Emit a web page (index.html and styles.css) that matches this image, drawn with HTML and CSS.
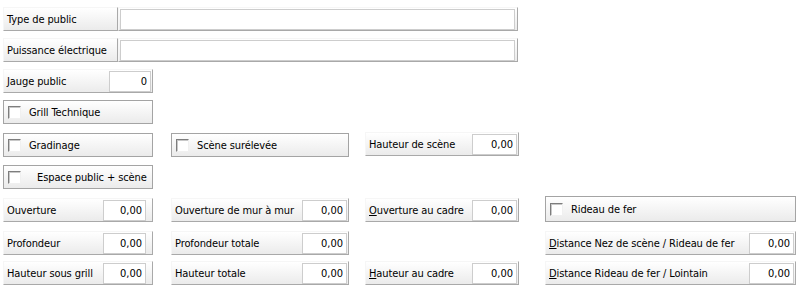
FILE: index.html
```html
<!DOCTYPE html>
<html lang="fr">
<head>
    <meta charset="UTF-8">
    <title>Salle</title>
    <link rel="stylesheet" href="styles.css">
</head>
<body>
    <div class="form">
        <div class="wide">
            <div class="field wide-label"><span class="lbl">Type de public</span></div>
            <div class="field wide-input"><input class="text" type="text" value=""></div>
        </div>
        <div class="wide">
            <div class="field wide-label"><span class="lbl">Puissance électrique</span></div>
            <div class="field wide-input"><input class="text" type="text" value=""></div>
        </div>

        <div class="field c1 jauge"><span class="lbl">Jauge public</span><input class="num" type="text" value="0"></div>

        <div class="field check c1 r4"><span class="box"></span><span class="lbl">Grill Technique</span></div>

        <div class="field check c1 r5"><span class="box"></span><span class="lbl">Gradinage</span></div>
        <div class="field check c2 r5"><span class="box"></span><span class="lbl">Scène surélevée</span></div>
        <div class="field c3 r5"><span class="lbl">Hauteur de scène</span><input class="num" type="text" value="0,00"></div>

        <div class="field check c1 r6"><span class="box"></span><span class="lbl indent">Espace public + scène</span></div>

        <div class="field c1 r7 loose"><span class="lbl">Ouverture</span><input class="num" type="text" value="0,00"></div>
        <div class="field c2 r7"><span class="lbl">Ouverture de mur à mur</span><input class="num" type="text" value="0,00"></div>
        <div class="field c3 r7"><span class="lbl"><u>O</u>uverture au cadre</span><input class="num" type="text" value="0,00"></div>
        <div class="field check c4 r7 tall"><span class="box"></span><span class="lbl">Rideau de fer</span></div>

        <div class="field c1 r8 loose"><span class="lbl">Profondeur</span><input class="num" type="text" value="0,00"></div>
        <div class="field c2 r8"><span class="lbl">Profondeur totale</span><input class="num" type="text" value="0,00"></div>
        <div class="field c4 r8"><span class="lbl"><u>D</u>istance Nez de scène / Rideau de fer</span><input class="num" type="text" value="0,00"></div>

        <div class="field c1 r9 loose"><span class="lbl">Hauteur sous grill</span><input class="num" type="text" value="0,00"></div>
        <div class="field c2 r9"><span class="lbl">Hauteur totale</span><input class="num" type="text" value="0,00"></div>
        <div class="field c3 r9"><span class="lbl"><u>H</u>auteur au cadre</span><input class="num" type="text" value="0,00"></div>
        <div class="field c4 r9"><span class="lbl"><u>D</u>istance Rideau de fer / Lointain</span><input class="num" type="text" value="0,00"></div>
    </div>
</body>
</html>
```

FILE: styles.css
```css
body {
    margin: 0;
    padding: 0;
    background-color: #fff;
    color: #000;
    font-family: "DejaVu Sans Condensed", "DejaVu Sans", sans-serif;
    font-size: 11px;
    letter-spacing: -0.1px;
}

.form {
    display: grid;
    grid-template-columns: 168px 194px 180px 251px;
    grid-template-rows: 24px 24px 24px 25px 26px 26px 26px 23px 24px;
    row-gap: 7px;
    padding: 7px 0 0 3px;
}

.wide {
    grid-column: 1 / 4;
    display: flex;
    width: 515px;
}

.field {
    display: flex;
    align-items: center;
    box-sizing: border-box;
    height: 24px;
    background: linear-gradient(#ffffff, #ebebeb);
    border-top: 1px solid #f6f6f6;
    border-left: 1px solid #f6f6f6;
    border-right: 1px solid #a9a9a9;
    border-bottom: 1px solid #a9a9a9;
}

.lbl {
    flex: 1;
    padding-left: 3px;
    white-space: nowrap;
}

.wide-label {
    width: 115px;
}

.wide-input {
    flex: 1;
    padding-left: 1px;
}

.c1 { grid-column: 1; width: 150px; }
.c2 { grid-column: 2; width: 178px; }
.c3 { grid-column: 3; width: 154px; }
.c4 { grid-column: 4; width: 251px; }

.r4 { grid-row: 4; }
.r5 { grid-row: 5; }
.r6 { grid-row: 6; }
.r7 { grid-row: 7; }
.r8 { grid-row: 8; }
.r9 { grid-row: 9; }

.c1.r5, .c2.r5 {
    margin-top: 1px;
}

.tall {
    height: 26px;
    margin-top: -2px;
}

input {
    font: inherit;
    color: #000;
    box-sizing: border-box;
    height: 21px;
    margin: 0 1px 0 0;
    background: #fff;
    border: 1px solid #cdcdcd;
    outline: none;
}

.text {
    flex: 1;
    margin-right: 2px;
}

.num {
    width: 45px;
    padding: 0 3px 0 0;
    text-align: right;
}

.jauge .num {
    width: 42px;
}

.loose .num {
    width: 43px;
    margin-right: 6px;
}

.check {
    border: 1px solid #a4a4a4;
}

.check .lbl {
    padding-left: 8px;
}

.check .lbl.indent {
    padding-left: 16px;
}

.box {
    width: 13px;
    height: 13px;
    box-sizing: border-box;
    margin-left: 4px;
    background: #fff;
    border-top: 1px solid #7d7d7d;
    border-left: 1px solid #7d7d7d;
    border-right: 1px solid #f0f0f0;
    border-bottom: 1px solid #f0f0f0;
    box-shadow: inset 1px 1px 0 #c8c8c8;
}
```
